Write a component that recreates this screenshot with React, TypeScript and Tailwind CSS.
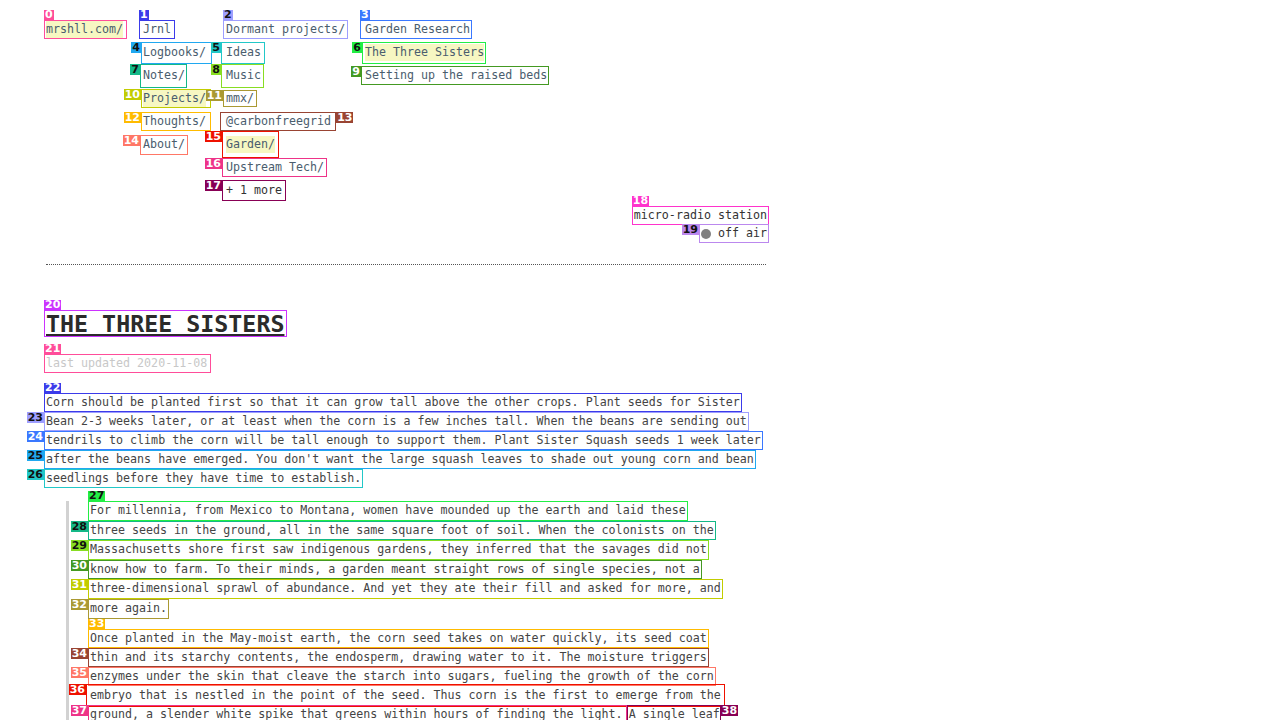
import React from 'react';

type Pal = { b: string; bg: string; fg: string };

const PALETTE: Pal[] = [
  { b: 'border-[#ff4d9a]', bg: 'bg-[#ff4d9a]', fg: 'text-white' }, // 0
  { b: 'border-[#3b3bea]', bg: 'bg-[#3b3bea]', fg: 'text-white' }, // 1
  { b: 'border-[#9e9eff]', bg: 'bg-[#9e9eff]', fg: 'text-[#111]' }, // 2
  { b: 'border-[#3a78ff]', bg: 'bg-[#3a78ff]', fg: 'text-white' }, // 3
  { b: 'border-[#20a8f0]', bg: 'bg-[#20a8f0]', fg: 'text-[#111]' }, // 4
  { b: 'border-[#22c8c8]', bg: 'bg-[#22c8c8]', fg: 'text-[#111]' }, // 5
  { b: 'border-[#22ee44]', bg: 'bg-[#22ee44]', fg: 'text-[#111]' }, // 6
  { b: 'border-[#14b887]', bg: 'bg-[#14b887]', fg: 'text-[#111]' }, // 7
  { b: 'border-[#88dd22]', bg: 'bg-[#88dd22]', fg: 'text-[#111]' }, // 8
  { b: 'border-[#449922]', bg: 'bg-[#449922]', fg: 'text-white' }, // 9
  { b: 'border-[#c2cc00]', bg: 'bg-[#c2cc00]', fg: 'text-white' }, // 10
  { b: 'border-[#aa9933]', bg: 'bg-[#aa9933]', fg: 'text-white' }, // 11
  { b: 'border-[#ffbb00]', bg: 'bg-[#ffbb00]', fg: 'text-white' }, // 12
  { b: 'border-[#994433]', bg: 'bg-[#994433]', fg: 'text-white' }, // 13
  { b: 'border-[#ff7766]', bg: 'bg-[#ff7766]', fg: 'text-white' }, // 14
  { b: 'border-[#ee1100]', bg: 'bg-[#ee1100]', fg: 'text-white' }, // 15
  { b: 'border-[#ee3388]', bg: 'bg-[#ee3388]', fg: 'text-white' }, // 16
  { b: 'border-[#880055]', bg: 'bg-[#880055]', fg: 'text-white' }, // 17
  { b: 'border-[#ff33cc]', bg: 'bg-[#ff33cc]', fg: 'text-white' }, // 18
  { b: 'border-[#bb88ee]', bg: 'bg-[#bb88ee]', fg: 'text-[#111]' }, // 19
  { b: 'border-[#cc33ff]', bg: 'bg-[#cc33ff]', fg: 'text-white' }, // 20
];

const pal = (n: number): Pal => (n <= 20 ? PALETTE[n] : PALETTE[n - 21]);

type Pos = 'top' | 'left' | 'right';

function Badge({ n, pos }: { n: number; pos: Pos }) {
  const c = pal(n);
  const p =
    pos === 'top'
      ? 'left-[-1px] bottom-[calc(100%+1px)] h-[10px] leading-[10px]'
      : pos === 'left'
      ? 'right-[calc(100%+1px)] top-[-1px] h-[11px] leading-[11px]'
      : 'left-[calc(100%+1px)] top-[-1px] h-[11px] leading-[11px]';
  return (
    <span
      className={`absolute z-10 ${p} ${c.bg} ${c.fg} px-[1px] text-[11px] font-bold font-['DejaVu_Sans',sans-serif] whitespace-nowrap`}
    >
      {n}
    </span>
  );
}

function Mark({
  n,
  pos = 'top',
  className = '',
  children,
}: {
  n: number;
  pos?: Pos;
  className?: string;
  children?: React.ReactNode;
}) {
  const c = pal(n);
  return (
    <span className={`relative border whitespace-pre ${c.b} ${className}`}>
      {children}
      <Badge n={n} pos={pos} />
    </span>
  );
}

function Hl({ children }: { children: React.ReactNode }) {
  return <span className="bg-[#f7f7c2]">{children}</span>;
}

function Slot({ children }: { children: React.ReactNode }) {
  return <div className="h-[23px] flex items-center">{children}</div>;
}

const nav = 'inline-flex items-center text-[#4a5d6e]';

function Line({
  n,
  pos,
  children,
  className = '',
}: {
  n: number;
  pos: Pos;
  children: React.ReactNode;
  className?: string;
}) {
  return (
    <div className="flex">
      <Mark n={n} pos={pos} className={`block px-[1px] ${className}`}>
        {children}
      </Mark>
    </div>
  );
}

export default function App() {
  return (
    <div className="min-h-screen bg-white font-['DejaVu_Sans_Mono',monospace] text-[11.65px] text-[#444]">
      {/* Navigation tree */}
      <nav className="flex pt-[18px] pl-[46px]">
        <div className="w-[97px]">
          <Slot>
            <Mark n={0} className={`${nav} -ml-[2px] pl-[1px] pr-[3px] h-[19px]`}>
              <Hl>mrshll.com/</Hl>
            </Mark>
          </Slot>
        </div>
        <div className="w-[83px] flex flex-col">
          <Slot>
            <Mark n={1} className={`${nav} -ml-[4px] pl-[3px] pr-[3px] h-[19px]`}>Jrnl</Mark>
          </Slot>
          <Slot>
            <Mark n={4} pos="left" className={`${nav} -ml-[2px] pl-[1px] pr-[5px] h-[22px]`}>Logbooks/</Mark>
          </Slot>
          <Slot>
            <Mark n={7} pos="left" className={`${nav} -ml-[3px] pl-[2px] pr-[1px] h-[24px]`}>Notes/</Mark>
          </Slot>
          <Slot>
            <Mark n={10} pos="left" className={`${nav} -ml-[2px] pl-[1px] pr-[4px] h-[19px]`}>
              <Hl>Projects/</Hl>
            </Mark>
          </Slot>
          <Slot>
            <Mark n={12} pos="left" className={`${nav} -ml-[2px] pl-[1px] pr-[4px] h-[19px]`}>Thoughts/</Mark>
          </Slot>
          <Slot>
            <Mark n={14} pos="left" className={`${nav} -ml-[3px] pl-[2px] pr-[2px] h-[20px]`}>About/</Mark>
          </Slot>
        </div>
        <div className="w-[139px] flex flex-col">
          <Slot>
            <Mark n={2} className={`${nav} -ml-[3px] pl-[2px] pr-[2px] h-[19px]`}>Dormant projects/</Mark>
          </Slot>
          <Slot>
            <Mark n={5} pos="left" className={`${nav} -ml-[5px] pl-[4px] pr-[3px] h-[22px]`}>Ideas</Mark>
          </Slot>
          <Slot>
            <Mark n={8} pos="left" className={`${nav} -ml-[5px] pl-[4px] pr-[2px] h-[24px]`}>Music</Mark>
          </Slot>
          <Slot>
            <Mark n={11} pos="left" className={`${nav} -ml-[3px] pl-[2px] pr-[2px] h-[17px]`}>mmx/</Mark>
          </Slot>
          <Slot>
            <Mark n={13} pos="right" className={`${nav} -ml-[6px] pl-[5px] pr-[4px] h-[19px]`}>@carbonfreegrid</Mark>
          </Slot>
          <Slot>
            <Mark n={15} pos="left" className={`${nav} -ml-[4px] pl-[3px] pr-[3px] h-[27px]`}>
              <Hl>Garden/</Hl>
            </Mark>
          </Slot>
          <Slot>
            <Mark n={16} pos="left" className={`${nav} -ml-[4px] pl-[3px] pr-[2px] h-[19px]`}>Upstream Tech/</Mark>
          </Slot>
          <Slot>
            <Mark n={17} pos="left" className={`inline-flex items-center text-[#333] -ml-[4px] pl-[3px] pr-[3px] h-[21px]`}>+ 1 more</Mark>
          </Slot>
        </div>
        <div className="flex flex-col">
          <Slot>
            <Mark n={3} className={`${nav} -ml-[5px] pl-[4px] pr-[1px] h-[19px]`}>Garden Research</Mark>
          </Slot>
          <Slot>
            <Mark n={6} pos="left" className={`${nav} -ml-[3px] pl-[2px] pr-[1px] h-[22px]`}>
              <Hl>The Three Sisters</Hl>
            </Mark>
          </Slot>
          <Slot>
            <Mark n={9} pos="left" className={`${nav} -ml-[4px] pl-[3px] pr-[1px] h-[19px]`}>Setting up the raised beds</Mark>
          </Slot>
        </div>
      </nav>

      <main className="ml-[44px] w-[725px]">
        {/* micro-radio */}
        <div className="mt-[4px] flex flex-col items-end text-[#333]">
          <Mark n={18} className="block px-[1px] leading-[17px]">micro-radio station</Mark>
          <Mark n={19} pos="left" className="flex items-center px-[1px] h-[19px] -mt-[1px]">
            <span className="inline-block w-[10px] h-[10px] rounded-full bg-[#808080] mr-[7px]" />
            off air
          </Mark>
        </div>

        <hr className="mt-[21px] ml-[2px] w-[720px] border-0 border-t border-dotted border-[#555]" />

        {/* Title */}
        <div className="mt-[45px] flex">
          <Mark n={20} className="block pl-[1px] pr-[2px] h-[27px] leading-[25px]">
            <h1 className="inline text-[23.3px] font-bold text-[#2b2b2b] underline decoration-2 underline-offset-[2px]">
              THE THREE SISTERS
            </h1>
          </Mark>
        </div>

        <div className="mt-[17px] flex">
          <Mark n={21} className="block pl-[1px] pr-[3px] leading-[17px] text-[#c8c8c8]">last updated 2020-11-08</Mark>
        </div>

        {/* Paragraph */}
        <div className="mt-[20px] leading-[17px]">
          <Line n={22} pos="top">Corn should be planted first so that it can grow tall above the other crops. Plant seeds for Sister</Line>
          <Line n={23} pos="left">Bean 2-3 weeks later, or at least when the corn is a few inches tall. When the beans are sending out</Line>
          <Line n={24} pos="left">tendrils to climb the corn will be tall enough to support them. Plant Sister Squash seeds 1 week later</Line>
          <Line n={25} pos="left">after the beans have emerged. You don't want the large squash leaves to shade out young corn and bean</Line>
          <Line n={26} pos="left">seedlings before they have time to establish.</Line>
        </div>

        {/* Blockquote */}
        <blockquote className="mt-[13px] ml-[22px] border-l-[3px] border-[#d2d2d2] pl-[19px] pb-[20px]">
          <div className="leading-[17.6px]">
            <Line n={27} pos="top">For millennia, from Mexico to Montana, women have mounded up the earth and laid these</Line>
            <Line n={28} pos="left">three seeds in the ground, all in the same square foot of soil. When the colonists on the</Line>
            <Line n={29} pos="left">Massachusetts shore first saw indigenous gardens, they inferred that the savages did not</Line>
            <Line n={30} pos="left">know how to farm. To their minds, a garden meant straight rows of single species, not a</Line>
            <Line n={31} pos="left">three-dimensional sprawl of abundance. And yet they ate their fill and asked for more, and</Line>
            <Line n={32} pos="left">more again.</Line>
          </div>
          <div className="mt-[10px] leading-[17.3px]">
            <Line n={33} pos="top">Once planted in the May-moist earth, the corn seed takes on water quickly, its seed coat</Line>
            <Line n={34} pos="left">thin and its starchy contents, the endosperm, drawing water to it. The moisture triggers</Line>
            <Line n={35} pos="left">enzymes under the skin that cleave the starch into sugars, fueling the growth of the corn</Line>
            <Line n={36} pos="left" className="-ml-[2px] pl-[3px] pr-[3px] -mt-[2px] -mb-[2px] h-[23px] leading-[21px]">
              embryo that is nestled in the point of the seed. Thus corn is the first to emerge from the
            </Line>
            <div className="flex">
              <Mark n={37} pos="left" className="block pl-[1px] pr-[3px]">
                ground, a slender white spike that greens within hours of finding the light.
              </Mark>
              <Mark n={38} pos="right" className="block pl-[1px]">A single leaf</Mark>
            </div>
            <div className="leading-[17.3px] pl-[2px]">
              unfurls from the spike, then another, as the corn reaches for the sun.
            </div>
          </div>
        </blockquote>
      </main>
    </div>
  );
}
